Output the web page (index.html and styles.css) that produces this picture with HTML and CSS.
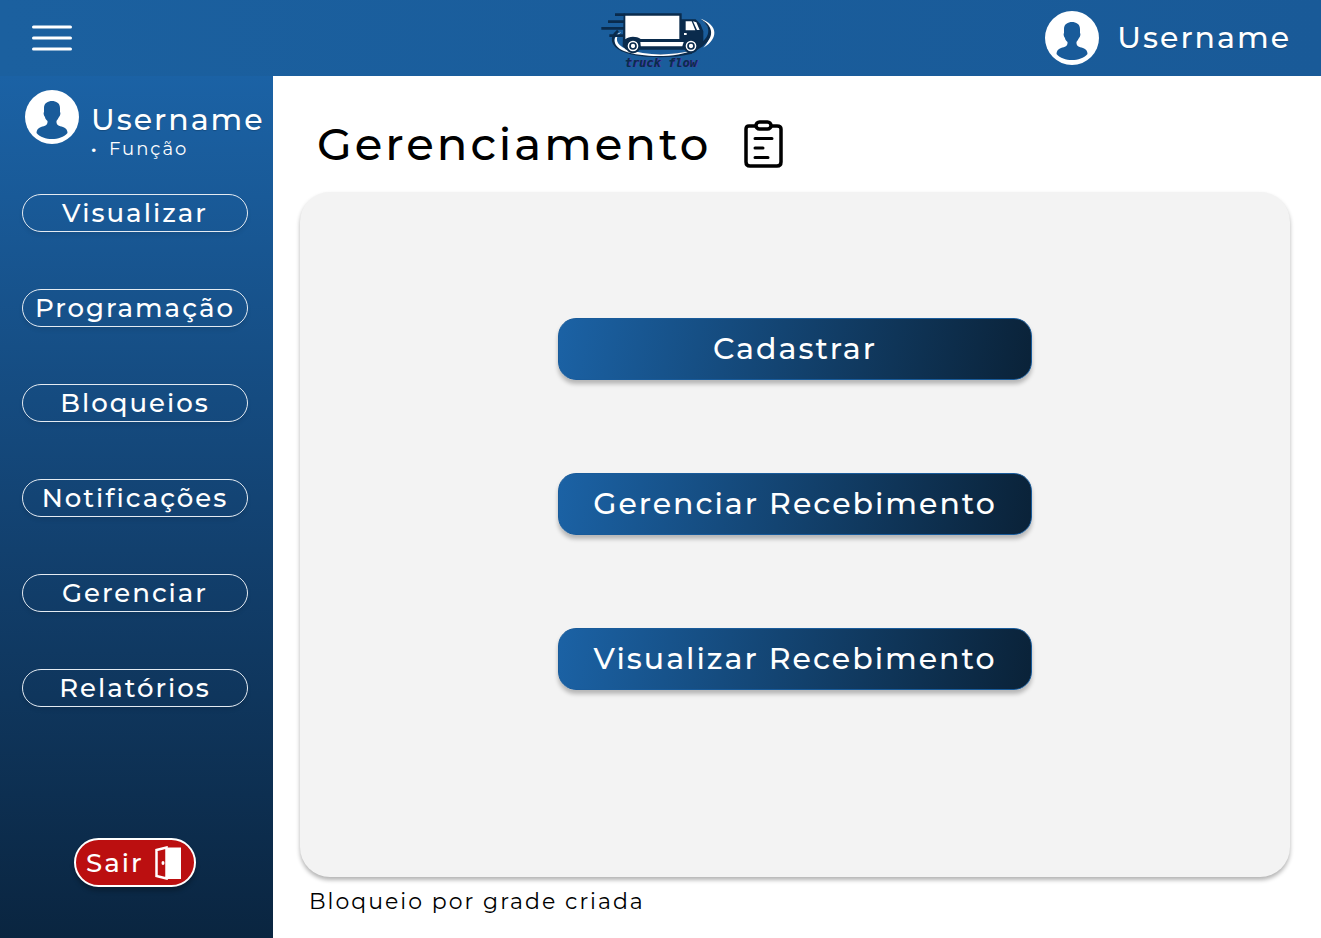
FILE: index.html
```html
<!DOCTYPE html>
<html lang="pt-BR">
<head>
<meta charset="utf-8">
<meta name="viewport" content="width=device-width, initial-scale=1">
<title>Truck Flow - Gerenciamento</title>
<link rel="stylesheet" href="styles.css">
</head>
<body>
<svg width="0" height="0" class="sprite" aria-hidden="true">
  <symbol id="avatar" viewBox="0 0 54 54">
    <circle cx="27" cy="27" r="27" fill="#fff"/>
    <path d="M27 11C31 11 35 13 35 18V22C36 23 35 26 34 27C33 29 32 30 31.500 31C31 35 34 36 38 37C41 38 42.500 40 42.500 43C39 47 33 49 27 49C21 49 15 47 11.500 43C11.500 40 13 38 16 37C20 36 23 35 22.500 31C21 30 20 28 20 27C19 26 18 23 19 22V18C19 13 23 11 27 11Z" fill="#195b9a"/>
  </symbol>
</svg>
<header class="topbar">
  <button class="menu" type="button" aria-label="Menu">
    <svg width="40" height="26" viewBox="0 0 40 26" aria-hidden="true"><path d="M1.500 2H38.500M1.500 13H38.500M1.500 24H38.500" stroke="#fff" stroke-width="3" stroke-linecap="round"/></svg>
  </button>
  <a class="logo" href="#" aria-label="Truck Flow">
    <svg width="140" height="76" viewBox="0 0 420 228">
      <path d="M84 92C60 112 66 136 96 150C150 173 245 171 306 157" fill="none" stroke="#0a2b4c" stroke-width="8"/>
      <path d="M94 95C72 112 78 134 108 147C170 168 245 168 310 150C270 171 165 176 102 153C66 138 66 108 94 95Z" fill="#fff"/>
      <path d="M332 56C385 75 386 116 340 143C364 118 368 82 332 56Z" fill="#fff"/>
      <path d="M332 58C374 78 372 116 338 138L330 132C366 105 360 78 332 58Z" fill="#0a2b4c"/>
      <path d="M75 44H104M54 65H104M34 85H104M58 107H104" stroke="#0a2b4c" stroke-width="8"/>
      <path d="M101 40H275V58H317L331 72L340 94V138L322 149H108L98 138Z" fill="#0a2b4c"/>
      <path d="M106 47H268V117H152C140 108 116 108 106 118Z" fill="#fff"/>
      <path d="M151 126H281L277 139H152Z" fill="#fff"/>
      <path d="M287 64H305L316 91H287ZM309 64L319 67L329 90H321Z" fill="#fff"/>
      <path d="M282 99H290V105H282Z" fill="#fff"/>
      <g fill="#fff" stroke="#0a2b4c"><circle cx="129" cy="138" r="19" stroke-width="6"/><circle cx="303" cy="138" r="19" stroke-width="6"/><circle cx="129" cy="138" r="9" stroke-width="5"/><circle cx="303" cy="138" r="9" stroke-width="5"/></g>
      <text class="logo-name logo-glow" x="107" y="202" aria-hidden="true">truck flow</text>
      <text class="logo-name" x="104" y="200">truck flow</text>
    </svg>
  </a>
  <div class="account">
    <svg class="avatar" aria-hidden="true"><use href="#avatar"/></svg>
    <span class="username">Username</span>
  </div>
</header>
<div class="layout">
  <aside class="sidebar">
    <div class="profile">
      <svg class="avatar" aria-hidden="true"><use href="#avatar"/></svg>
      <div class="identity">
        <span class="username">Username</span>
        <span class="role"><span class="dot">·</span>Função</span>
      </div>
    </div>
    <nav class="nav">
      <button class="pill" type="button">Visualizar</button>
      <button class="pill" type="button">Programação</button>
      <button class="pill" type="button">Bloqueios</button>
      <button class="pill" type="button">Notificações</button>
      <button class="pill" type="button">Gerenciar</button>
      <button class="pill" type="button">Relatórios</button>
    </nav>
    <button class="logout" type="button">Sair
      <svg width="26" height="34" viewBox="0 0 26 34" aria-hidden="true"><path d="M1.500 4L11.500 1.500V32.500L1.500 30Z" fill="none" stroke="#fff" stroke-width="2.500"/><path d="M12 1.500H26V33H12Z" fill="#fff"/><ellipse cx="8" cy="17" rx="1.500" ry="2" fill="#fff"/></svg>
    </button>
  </aside>
  <main class="content">
    <div class="heading">
      <h1>Gerenciamento</h1>
      <svg width="40" height="48" viewBox="0 0 40 48" fill="none" stroke="#000" stroke-width="3.500" stroke-linecap="round" stroke-linejoin="round" aria-hidden="true"><path d="M12 6H6Q3 6 3 9V42Q3 46 7 46H34Q38 46 38 42V9Q38 6 34 6H29"/><rect x="13" y="2" width="15" height="7" rx="3.500"/><path d="M12 18.500H29M12 28H20M12 37.500H25" stroke-width="3"/></svg>
    </div>
    <section class="panel">
      <button class="action" type="button">Cadastrar</button>
      <button class="action" type="button">Gerenciar Recebimento</button>
      <button class="action" type="button">Visualizar Recebimento</button>
    </section>
    <p class="note">Bloqueio por grade criada</p>
  </main>
</div>
</body>
</html>
```
FILE: styles.css
```css
* { box-sizing: border-box; }
body {
  margin: 0;
  min-height: 100vh;
  display: flex;
  flex-direction: column;
  font-family: Montserrat, Inter, "Open Sans", sans-serif;
  color: #000;
  background: #fff;
}
button { font: inherit; cursor: pointer; }
svg { flex: none; }
.sprite { position: absolute; }
.topbar {
  display: grid;
  grid-template-columns: 1fr auto 1fr;
  align-items: center;
  height: 76px;
  padding: 0 30px 0 32px;
  background: linear-gradient(90deg, #1b609f, #195a98);
}
.menu {
  justify-self: start;
  display: flex;
  padding: 0;
  border: 0;
  background: none;
}
.logo, .logo svg { display: block; }
.logo { margin-right: 4px; }
.logo-name {
  font: italic bold 36px "DejaVu Sans Mono", monospace;
  fill: #0a2b4c;
}
.logo-glow { fill: #4a35a0; }
.account {
  justify-self: end;
  display: flex;
  align-items: center;
  gap: 18px;
}
.avatar { width: 54px; height: 54px; }
.username {
  font-size: 30px;
  font-weight: 500;
  line-height: 36px;
  letter-spacing: 2px;
  color: #fff;
  text-shadow: 0 1px 1px rgba(0, 0, 0, .2);
}
.layout { flex: 1; display: flex; }
.sidebar {
  flex: none;
  width: 273px;
  display: flex;
  flex-direction: column;
  padding: 14px 0 51px 22px;
  background: linear-gradient(#1b62a5, #195a98 14%, #12406e 55%, #0a2540);
}
.profile { display: flex; gap: 12px; padding-left: 3px; height: 104px; }
.identity { display: flex; flex-direction: column; padding-top: 12px; }
.role {
  font-size: 18px;
  line-height: 22px;
  letter-spacing: 2px;
  color: #fff;
}
.dot { display: inline-block; width: 18px; font-weight: 700; }
.nav { display: flex; flex-direction: column; gap: 57px; }
.pill {
  width: 226px;
  height: 38px;
  padding: 0;
  border: 1px solid #e4ebf2;
  border-radius: 19px;
  background: none;
  box-shadow: 0 3px 4px rgba(0, 0, 0, .08);
  color: #fff;
  font-size: 26px;
  font-weight: 500;
  letter-spacing: 2px;
  line-height: 32px;
}
.logout {
  display: flex;
  align-items: center;
  justify-content: space-between;
  width: 122px;
  height: 49px;
  margin: auto 0 0 52px;
  padding: 0 13px 0 10px;
  border: 2px solid #fff;
  border-radius: 25px;
  background: #bb0f10;
  box-shadow: 0 4px 4px rgba(0, 0, 0, .25);
  color: #fff;
  font-size: 26px;
  font-weight: 500;
  letter-spacing: 2px;
}
.content {
  flex: 1;
  display: flex;
  flex-direction: column;
  padding: 40px 31px 20px 27px;
}
.heading { display: flex; align-items: center; gap: 32px; padding: 0 17px; height: 56px; }
h1 { margin: 0; font-size: 45px; font-weight: 500; line-height: 56px; letter-spacing: 3px; }
.panel {
  flex: 1;
  display: flex;
  flex-direction: column;
  align-items: center;
  gap: 93px;
  margin-top: 20px;
  padding: 126px 20px 60px;
  border-radius: 30px;
  background: #f3f3f3;
  box-shadow: 0 3px 4px rgba(0, 0, 0, .3);
}
.action {
  width: 474px;
  max-width: 100%;
  height: 62px;
  padding: 0 0 2px;
  border: 1px solid #195b9a;
  border-radius: 18px;
  background: linear-gradient(100deg, #1b62a5, #0a2238);
  box-shadow: 0 4px 4px rgba(0, 0, 0, .25);
  color: #fff;
  font-size: 30px;
  font-weight: 500;
  letter-spacing: 2px;
}
.note { margin: 9px 0 0 9px; font-size: 22px; line-height: 32px; letter-spacing: 2px; }
```
